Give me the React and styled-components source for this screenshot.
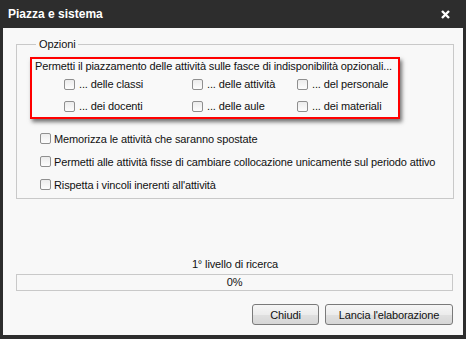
import React from "react";
import styled, { createGlobalStyle } from "styled-components";

const GlobalStyle = createGlobalStyle`
  html, body {
    margin: 0;
    padding: 0;
    background: #2d2d2d;
  }
  body {
    font-family: "Liberation Sans", Arial, sans-serif;
    font-size: 11px;
    letter-spacing: -0.12px;
    color: #111;
  }
`;

const unavail = [
  "... delle classi",
  "... delle attività",
  "... del personale",
  "... dei docenti",
  "... delle aule",
  "... dei materiali",
];

const options = [
  "Memorizza le attività che saranno spostate",
  "Permetti alle attività fisse di cambiare collocazione unicamente sul periodo attivo",
  "Rispetta i vincoli inerenti all'attività",
];

function Check({ label, gap }) {
  return (
    <CheckRow>
      <Box />
      <CheckLabel $gap={gap}>{label}</CheckLabel>
    </CheckRow>
  );
}

export default function App() {
  return (
    <>
      <GlobalStyle />
      <Window>
        <TitleBar>
          <Title>Piazza e sistema</Title>
          <svg width="9" height="9" viewBox="0 0 9 9">
            <path d="M1 1 L8 8 M8 1 L1 8" stroke="#fff" strokeWidth="2.4" />
          </svg>
        </TitleBar>
        <Body>
          <Group>
            <Legend>Opzioni</Legend>
            <Highlight>
              <Intro>
                Permetti il piazzamento delle attività sulle fasce di indisponibilità opzionali...
              </Intro>
              <ChoiceGrid>
                {unavail.map((l) => (
                  <Check key={l} label={l} gap={4} />
                ))}
              </ChoiceGrid>
            </Highlight>
            <OptionList>
              {options.map((l) => (
                <Check key={l} label={l} gap={3} />
              ))}
            </OptionList>
          </Group>
          <Spacer />
          <Level>1° livello di ricerca</Level>
          <Progress>0%</Progress>
          <Buttons>
            <Button $w={67}>Chiudi</Button>
            <Button $w={128}>Lancia l'elaborazione</Button>
          </Buttons>
        </Body>
      </Window>
    </>
  );
}

const Window = styled.div`
  width: 466px;
  height: 339px;
  background: #2d2d2d;
  display: flex;
  flex-direction: column;
  box-sizing: border-box;
`;

const TitleBar = styled.div`
  height: 28px;
  flex: none;
  display: flex;
  align-items: center;
  justify-content: space-between;
  padding: 0 16px 0 8px;
`;

const Title = styled.div`
  color: #fff;
  font-weight: bold;
  font-size: 12px;
  letter-spacing: 0;
`;

const Body = styled.div`
  flex: 1;
  margin: 0 3px 4px 3px;
  background: #f8f8f8;
  display: flex;
  flex-direction: column;
  padding: 9px 9px 10px 13px;
`;

const Group = styled.fieldset`
  margin: 0;
  padding: 6px 0 2px 13px;
  border: 1px solid #c9c9c9;
  min-width: 0;
`;

const Legend = styled.legend`
  padding: 0 3px;
  margin-left: 6px;
  line-height: 14px;
  color: #111;
`;

const Highlight = styled.div`
  width: 370px;
  box-sizing: border-box;
  border: 2px solid #ff0000;
  padding: 0 3px;
  box-shadow: 2px 3px 4px rgba(0, 0, 0, 0.55);
  background: #f9f9f9;
`;

const Intro = styled.div`
  line-height: 14px;
  white-space: nowrap;
`;

const ChoiceGrid = styled.div`
  display: grid;
  grid-template-columns: 128px 105px auto;
  grid-auto-rows: 22px;
  margin-left: 29px;
`;

const OptionList = styled.div`
  margin-top: 8px;
  margin-left: 10px;
  display: grid;
  grid-auto-rows: 23px;
`;

const CheckRow = styled.label`
  display: flex;
  align-items: center;
  white-space: nowrap;
`;

const Box = styled.span`
  width: 11px;
  height: 11px;
  box-sizing: border-box;
  border: 1px solid #8f8f8f;
  border-radius: 2px;
  background: linear-gradient(#ececec, #fdfdfd);
  flex: none;
`;

const CheckLabel = styled.span`
  margin-left: ${(p) => p.$gap}px;
`;

const Spacer = styled.div`
  flex: 1;
`;

const Level = styled.div`
  text-align: center;
  line-height: 14px;
  margin-bottom: 3px;
`;

const Progress = styled.div`
  height: 17px;
  box-sizing: border-box;
  border: 1px solid #c9c9c9;
  text-align: center;
  line-height: 15px;
  margin-right: 1px;
`;

const Buttons = styled.div`
  margin-top: 13px;
  display: flex;
  justify-content: flex-end;
  gap: 6px;
  margin-right: 1px;
`;

const Button = styled.button`
  width: ${(p) => p.$w}px;
  height: 21px;
  padding: 0;
  font-family: inherit;
  font-size: 11px;
  letter-spacing: inherit;
  color: #111;
  border: 1px solid #7a7a7a;
  border-radius: 3px;
  background: linear-gradient(#f6f6f6 0%, #ececec 50%, #e0e0e0 51%, #d6d6d6 100%);
`;
